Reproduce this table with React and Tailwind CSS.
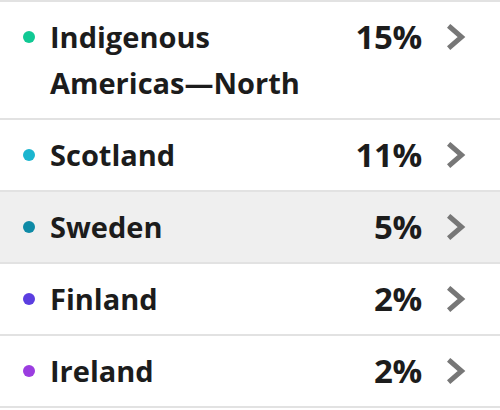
const rows = [
  { name: "Indigenous Americas—North", pct: "15%", color: "bg-[#10c994]", two: true },
  { name: "Scotland", pct: "11%", color: "bg-[#1bb5cf]" },
  { name: "Sweden", pct: "5%", color: "bg-[#0e8aa6]", active: true },
  { name: "Finland", pct: "2%", color: "bg-[#5b3ee0]" },
  { name: "Ireland", pct: "2%", color: "bg-[#9b3de0]" },
];

function Chevron() {
  return (
    <svg width="19" height="26" viewBox="0 0 19 26" className="block">
      <path d="M3.5 3.5 L14.5 13 L3.5 22.5" fill="none" stroke="#777777" strokeWidth="5" strokeLinecap="square" strokeLinejoin="miter" />
    </svg>
  );
}

export default function App() {
  return (
    <div className="w-[500px] h-[410px] bg-white overflow-hidden border-t-2 border-[#e2e2e2]" style={{ fontFamily: "'Open Sans', 'Liberation Sans', sans-serif" }}>
      {rows.map((r) => (
        <div key={r.name} className={`flex items-start py-3 border-b-2 border-[#e2e2e2] ${r.active ? "bg-[#efefef]" : "bg-white"}`}>
          <div className="w-[50px] h-[46px] flex items-center pl-[23px] shrink-0">
            <div className={`w-[12px] h-[12px] rounded-full ${r.color}`} />
          </div>
          <div className="flex-1 text-[29px] leading-[46px] font-bold text-[#1c1c1c] pr-4">
            {r.two ? (<>Indigenous<br />Americas—North</>) : r.name}
          </div>
          <div className="text-[33px] leading-[46px] font-bold text-[#1c1c1c] text-right tracking-[-0.3px]">{r.pct}</div>
          <div className="w-[78px] h-[46px] flex items-center pl-[25px] shrink-0">
            <Chevron />
          </div>
        </div>
      ))}
    </div>
  );
}
